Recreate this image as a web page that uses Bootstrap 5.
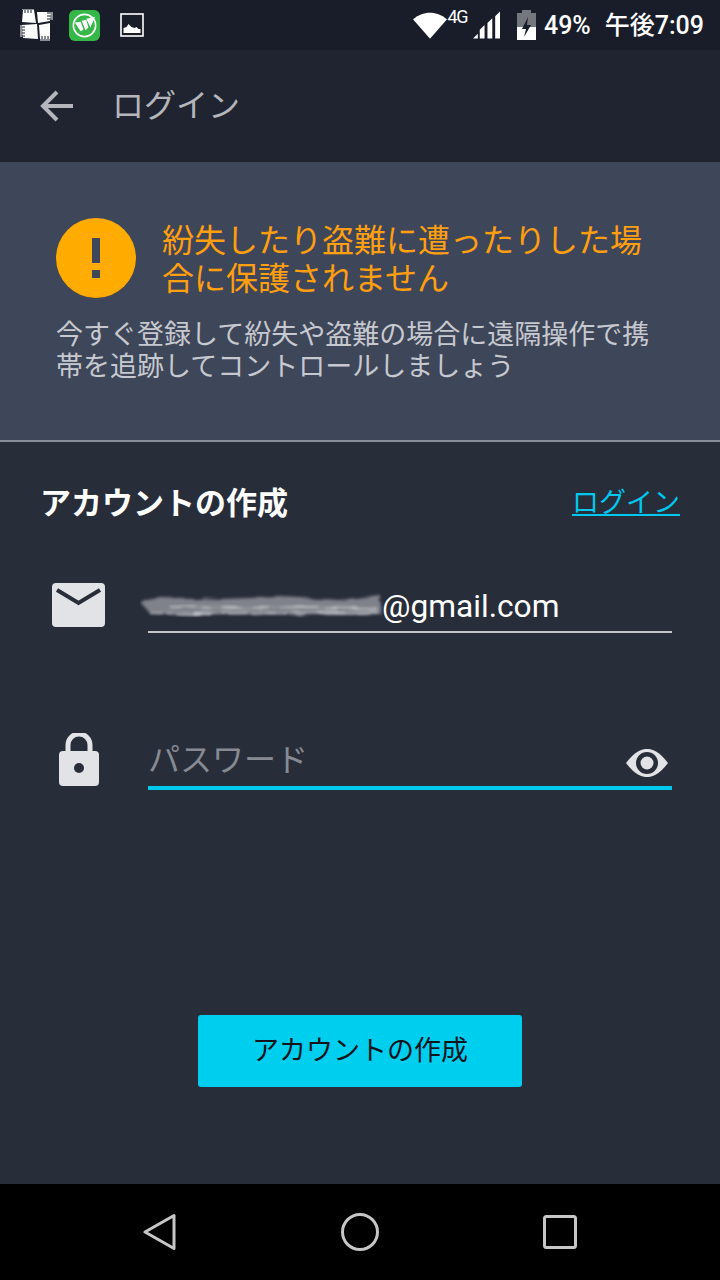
<!DOCTYPE html>
<html lang="ja">
<head>
  <meta charset="UTF-8" />
  <meta name="viewport" content="width=device-width, initial-scale=1.0">
  <title>ログイン</title>
  <link href="https://cdn.jsdelivr.net/npm/bootstrap@5.3.3/dist/css/bootstrap.min.css" rel="stylesheet">
  <style>
    html, body { width: 720px; height: 1280px; margin: 0; overflow: hidden; }
    body { background: #282d3a; font-family: Roboto, "Noto Sans CJK JP", sans-serif; color: #fff; }
    .screen { width: 720px; height: 1280px; }
    .statusbar { height: 50px; background: #191d2a; padding: 0 16px 0 20px; }
    .status-text { font-size: 25px; font-weight: 500; color: #fff; line-height: 1; }
    .status-4g { font-size: 18px; line-height: 1; margin: -17px 0 0 1px; letter-spacing: -1.5px; }
    .appbar { height: 112px; background: #1f2430; padding-left: 40px; }
    .appbar-title { font-size: 32px; color: #b4b6bb; margin-left: 39px; line-height: 1; }
    .warn-box { height: 278px; background: #3e4659; padding: 56px 56px 0; }
    .warn-circle { width: 80px; height: 80px; background: #ffab00; border-radius: 50%; flex: none; }
    .warn-title { font-size: 32px; line-height: 38px; color: #ff9e0f; margin: 4px 0 0 26px; width: 490px; }
    .warn-text { font-size: 27px; line-height: 32px; color: #c6c9cf; margin-top: 21px; width: 610px; }
    .rule-line { height: 2px; background: #8a8e98; }
    .form-area { height: 742px; padding: 42px 40px 0; }
    .form-title { font-size: 31px; font-weight: 700; line-height: 38px; margin-top: 1px; }
    .login-link { font-size: 27px; line-height: 34px; margin-bottom: 2px; color: #00c8ee; text-decoration: underline; }
    .login-link:hover { color: #00c8ee; }
    .field-row { height: 68px; }
    .email-row { margin-top: 60px; }
    .field-icon { width: 108px; flex: none; }
    .mail-icon { padding-left: 12px; }
    .lock-icon { padding-left: 18px; padding-bottom: 3px; }
    .field-box { width: 524px; border-bottom: 2px solid #c4c5c9; position: relative; }
    .email-value { font-size: 31.700px; line-height: 48px; margin-left: 234px; color: #fff; }
    .blur-mark { position: absolute; left: -8px; top: 4px; }
    .pass-row { margin-top: 71px; }
    .pass-box { width: 524px; border-bottom: 4px solid #00c8ee; }
    .pass-hint { font-size: 32px; line-height: 48px; margin-bottom: 2px; color: #868a92; }
    .eye-icon { margin-bottom: 8px; }
    .create-btn { width: 324px; height: 72px; background: #00ceef; border: 0; border-radius: 3px; font-size: 27px; color: #11141c; }
    .create-btn:hover { background: #00ceef; color: #11141c; }
    .btn-wrap { margin-top: 225px; }
    .navbar-bottom { height: 96px; background: #000; padding: 0 60px; }
    .nav-cell { width: 200px; }
  </style>
</head>
<body>
  <div class="screen d-flex flex-column">

    <div class="statusbar d-flex align-items-center">
      <svg width="33" height="32" viewBox="0 0 33 32">
        <path d="M3 1h11l2 13-14-1zM17 3h14l-1 9-12 2zM2 16l15-1 1 15-15-1zM19 16l11-2v16H20z" fill="#fff"/>
        <path d="M3 1V0M5 3V0M7 3V0M9 3V0M11 3V0M13 3V0M29 4h4M29 6h4M29 8h4M29 10h4M0 17h4M0 19h4M0 21h4M0 23h4M0 25h4M0 27h4M21 28v4M23 28v4M25 28v4M27 28v4M29 28v4" stroke="#fff" stroke-width="1" fill="none"/>
        <path d="M3 3h0M5 1v3M8 1v3M11 1v3M27 4h4M27 7h4M27 10h4M2 18h3M2 21h3M2 24h3M2 27h3M22 27v3M25 27v3M28 27v3" stroke="#191d2a" stroke-width="1" fill="none"/>
      </svg>
      <svg style="margin-left:16px" width="31" height="31" viewBox="0 0 32 32">
        <rect x="0" y="0" width="32" height="32" rx="6" fill="#35b848"/>
        <circle cx="16" cy="16" r="11.500" fill="none" stroke="#fff" stroke-width="1.600"/>
        <path d="M6 13l6-1 3 8-3 2zM13 11l5-1 2 8-3 3zM18 9l9-2-5 11z" fill="#fff"/>
      </svg>
      <svg style="margin-left:20px" width="24" height="24" viewBox="0 0 24 24">
        <rect x="1" y="1" width="22" height="22" fill="none" stroke="#fff" stroke-width="1.600"/>
        <path d="M3.500 20v-5l3-1 2-3 3 3 3 1 2-1 2 2 2 0v4z" fill="#fff"/>
      </svg>
      <div class="ms-auto d-flex align-items-center">
        <svg width="34" height="27" viewBox="0 0 36 28"><path d="M0 7.500C10-2 26-2 36 7.500L18 28z" fill="#fff"/></svg>
        <span class="status-4g">4G</span>
        <svg style="margin-left:6px" width="27" height="28" viewBox="0 0 28 28">
          <path d="M0 28l5-5v5zM7 28v-9l5-5v14zM15 28V12l5-5v21zM23 28V5l5-5v28z" fill="#fff"/>
        </svg>
        <svg style="margin-left:17px" width="19" height="30" viewBox="0 0 19 30">
          <path d="M5 0h9v3h5v27H0V3h5z" fill="#fff" fill-opacity=".4"/>
          <path d="M0 17h19v13H0z" fill="#fff"/>
          <path d="M11 7l-6 12h4l-2 8 7-12h-4z" fill="#191d2a"/>
        </svg>
        <span class="status-text" style="margin-left:8px">49%</span>
        <span class="status-text" style="margin-left:14px">午後7:09</span>
      </div>
    </div>

    <div class="appbar d-flex align-items-center">
      <svg width="33" height="32" viewBox="0 0 33 32">
        <path d="M33 16H3M17 2L3 16l14 14" fill="none" stroke="#b4b6bb" stroke-width="4"/>
      </svg>
      <span class="appbar-title">ログイン</span>
    </div>

    <div class="warn-box">
      <div class="d-flex">
        <div class="warn-circle d-flex align-items-center justify-content-center">
          <svg width="8" height="40" viewBox="0 0 8 40"><path d="M0 0h8v25H0zM0 32h8v8H0z" fill="#3e4659"/></svg>
        </div>
        <div class="warn-title">紛失したり盗難に遭ったりした場合に保護されません</div>
      </div>
      <div class="warn-text">今すぐ登録して紛失や盗難の場合に遠隔操作で携帯を追跡してコントロールしましょう</div>
    </div>
    <div class="rule-line"></div>

    <div class="form-area flex-grow-1">
      <div class="d-flex justify-content-between align-items-center">
        <div class="form-title">アカウントの作成</div>
        <a class="login-link" href="#">ログイン</a>
      </div>

      <div class="field-row email-row d-flex align-items-start">
        <div class="field-icon mail-icon">
          <svg width="53" height="44" viewBox="0 0 53 44">
            <rect x="0" y="0" width="53" height="44" rx="4" fill="#e2e3e6"/>
            <path d="M5 7l21.500 13L48 7" fill="none" stroke="#282d3a" stroke-width="4"/>
          </svg>
        </div>
        <div class="field-box">
          <svg class="blur-mark" width="250" height="48" viewBox="0 0 250 48">
            <defs>
              <filter id="smear" x="-5%" y="-40%" width="110%" height="180%">
                <feTurbulence type="fractalNoise" baseFrequency="0.03 0.25" numOctaves="2" seed="4"/>
                <feDisplacementMap in="SourceGraphic" scale="6"/>
                <feGaussianBlur stdDeviation="1.500"/>
              </filter>
            </defs>
            <path d="M0 15L20 10 80 12 140 10 200 13 240 8 242 27 190 28 130 26 70 28 10 26z" fill="#7f828a" filter="url(#smear)"/>
            <path d="M10 26L70 27 130 25 190 26 238 25M30 20L100 21 170 20 236 21" fill="none" stroke="#c9cbcf" stroke-width="1.500" filter="url(#smear)"/>
          </svg>
          <div class="email-value">@gmail.com</div>
        </div>
      </div>

      <div class="field-row pass-row d-flex align-items-end">
        <div class="field-icon lock-icon">
          <svg width="42" height="54" viewBox="0 0 42 54" class="d-block">
            <path d="M10 22V12a11 11 0 0 1 22 0v10" fill="none" stroke="#e2e3e6" stroke-width="5"/>
            <rect x="1" y="18" width="40" height="35" rx="4" fill="#e2e3e6"/>
            <circle cx="21" cy="35" r="5" fill="#282d3a"/>
          </svg>
        </div>
        <div class="pass-box d-flex justify-content-between align-items-end">
          <div class="pass-hint">パスワード</div>
          <svg class="eye-icon me-1" width="42" height="30" viewBox="0 0 42 30">
            <path d="M0 15C9 3 16 1 21 1s12 2 21 14c-9 12-16 14-21 14S9 27 0 15z" fill="#e2e3e6"/>
            <circle cx="21" cy="15" r="11" fill="#282d3a"/>
            <circle cx="21" cy="15" r="6.500" fill="#e2e3e6"/>
          </svg>
        </div>
      </div>

      <div class="btn-wrap d-flex justify-content-center">
        <button class="btn create-btn" type="button">アカウントの作成</button>
      </div>
    </div>

    <div class="navbar-bottom d-flex align-items-center">
      <div class="nav-cell d-flex justify-content-center">
        <svg width="34" height="38" viewBox="0 0 34 38"><path d="M2 19L31 2.500v33z" fill="none" stroke="#c6c6c6" stroke-width="3" stroke-linejoin="round"/></svg>
      </div>
      <div class="nav-cell d-flex justify-content-center">
        <svg width="38" height="38" viewBox="0 0 38 38"><circle cx="19" cy="19" r="17.500" fill="none" stroke="#c6c6c6" stroke-width="3"/></svg>
      </div>
      <div class="nav-cell d-flex justify-content-center">
        <svg width="34" height="34" viewBox="0 0 34 34"><rect x="1.500" y="1.500" width="31" height="31" rx="2" fill="none" stroke="#c6c6c6" stroke-width="3"/></svg>
      </div>
    </div>
  </div>
  <script src="https://cdn.jsdelivr.net/npm/bootstrap@5.3.3/dist/js/bootstrap.bundle.min.js"></script>
</body>
</html>
